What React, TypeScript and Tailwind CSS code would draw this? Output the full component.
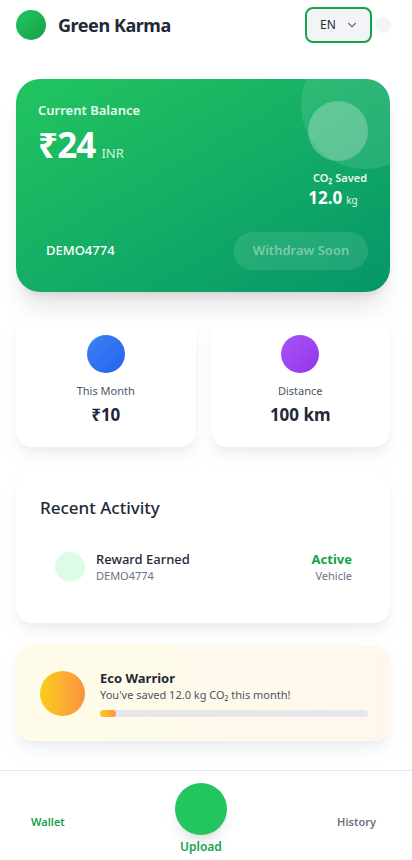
import { ChevronDown } from "lucide-react";

const font = { fontFamily: '"Noto Sans", "Open Sans", sans-serif' };

const Header = () => (
  <div className="flex items-center justify-between h-[50px] pl-4 pr-[21px]">
    <div className="flex items-center gap-3">
      <div className="size-[30px] rounded-full bg-linear-to-br from-[#22c55e] to-[#16a34a]" />
      <h1 className="text-[18px] font-bold text-[#1f2937] tracking-tight">Green Karma</h1>
    </div>
    <div className="flex items-center gap-[3px]">
      <button
        type="button"
        className="flex items-center gap-[9px] h-9 w-[67px] pl-[13px] rounded-lg border-2 border-[#16a34a] bg-[#f3f4f6] text-xs text-[#1f2937]"
      >
        EN
        <ChevronDown className="size-3.5 text-[#6b7280]" />
      </button>
      <div className="size-4 rounded-full bg-[#f3f4f6]" />
    </div>
  </div>
);

const BalanceCard = () => (
  <div className="relative overflow-hidden mt-[29px] h-[213px] rounded-3xl bg-linear-to-br from-[#22c55e] to-[#059669] p-[22px] shadow-xl text-white">
    <div className="absolute -top-[38px] left-[285px] size-32 rounded-full bg-white/10" />
    <div className="relative flex justify-between items-start">
      <div>
        <p className="text-[13px] font-semibold leading-[18px] text-white/90">Current Balance</p>
        <div className="flex items-baseline gap-1.5 mt-1">
          <span className="text-[35px] font-bold leading-[44px] tracking-tight">₹24</span>
          <span className="text-[13px] text-white/80">INR</span>
        </div>
      </div>
      <div className="flex flex-col items-center">
        <div className="ml-2 size-[60px] rounded-full bg-white/25" />
        <p className="mt-[9px] text-[11px] font-semibold leading-4 text-white/90 pl-[12px]">
          CO₂ Saved
        </p>
        <p className="leading-6 pr-[2px]">
          <span className="text-[17px] font-bold">12.0</span>
          <span className="text-[10px] ml-1 text-white/90">kg</span>
        </p>
      </div>
    </div>
    <div className="relative flex items-center justify-between mt-[20px]">
      <span className="pl-2 text-[13px] font-medium">DEMO4774</span>
      <button
        type="button"
        className="h-[38px] w-[134px] rounded-full bg-white/10 text-[13px] font-semibold text-white/40"
      >
        Withdraw Soon
      </button>
    </div>
  </div>
);

const StatCard = ({ label, value, color }: { label: string; value: string; color: string }) => (
  <div className="flex-1 flex flex-col items-center h-[132px] rounded-2xl bg-white pt-5 shadow-lg shadow-gray-200/70">
    <div className={`size-[38px] rounded-full bg-linear-to-br ${color}`} />
    <p className="mt-2.5 text-[11px] leading-4 text-[#4b5563]">{label}</p>
    <p className="mt-[4px] text-[17px] font-bold leading-6 text-[#1f2937]">{value}</p>
  </div>
);

const RecentActivity = () => (
  <div className="mt-[27px] h-[149px] rounded-2xl bg-white px-6 pt-[22px] shadow-lg shadow-gray-200/70">
    <h2 className="text-[17px] font-medium leading-6 text-[#1f2937]">Recent Activity</h2>
    <div className="mt-[18px] flex items-center justify-between pl-[15px] pr-[14px] py-[12px]">
      <div className="flex items-center gap-[11px]">
        <div className="size-[30px] rounded-full bg-[#dcfce7]" />
        <div>
          <p className="text-[13px] font-medium leading-[18px] text-[#1f2937]">Reward Earned</p>
          <p className="text-[11px] leading-4 text-[#6b7280]">DEMO4774</p>
        </div>
      </div>
      <div className="text-right">
        <p className="text-[13px] font-bold leading-[18px] text-[#16a34a]">Active</p>
        <p className="text-[11px] leading-4 text-[#6b7280]">Vehicle</p>
      </div>
    </div>
  </div>
);

const EcoWarrior = () => (
  <div className="mt-[22px] h-[96px] flex items-center gap-[15px] rounded-2xl bg-linear-to-r from-[#fefce8] to-[#fff7ed] pl-6 pr-[22px] shadow-lg shadow-gray-200/70">
    <div className="size-[45px] shrink-0 rounded-full bg-linear-to-r from-[#facc15] to-[#fb923c]" />
    <div className="flex-1">
      <p className="text-[13px] font-bold leading-[18px] text-[#1f2937]">Eco Warrior</p>
      <p className="text-[11px] leading-4 text-[#4b5563]">You've saved 12.0 kg CO₂ this month!</p>
      <div className="mt-[7px] h-[7px] w-full rounded-full bg-[#e5e7eb]">
        <div className="h-full w-4 rounded-full bg-linear-to-r from-[#facc15] to-[#fb923c]" />
      </div>
    </div>
  </div>
);

const BottomNav = () => (
  <div className="mt-[29px] h-[90px] border-t border-[#e5e7eb] bg-white flex items-start justify-between pl-[31px] pr-[36px]">
    <span className="pt-[43px] text-[11px] font-semibold leading-4 text-[#16a34a]">Wallet</span>
    <div className="flex flex-col items-center pt-[12px]">
      <div className="size-[52px] rounded-full bg-[#22c55e] shadow-lg" />
      <span className="mt-1 text-xs font-semibold leading-4 text-[#16a34a]">Upload</span>
    </div>
    <span className="pt-[43px] text-[11px] font-semibold leading-4 text-[#6b7280]">History</span>
  </div>
);

export default function App() {
  return (
    <div className="min-h-screen bg-white" style={font}>
      <Header />
      <div className="pl-4 pr-[22px]">
        <BalanceCard />
        <div className="mt-[23px] flex gap-[15px]">
          <StatCard label="This Month" value="₹10" color="from-[#3b82f6] to-[#2563eb]" />
          <StatCard label="Distance" value="100 km" color="from-[#a855f7] to-[#9333ea]" />
        </div>
        <RecentActivity />
        <EcoWarrior />
      </div>
      <BottomNav />
    </div>
  );
}
